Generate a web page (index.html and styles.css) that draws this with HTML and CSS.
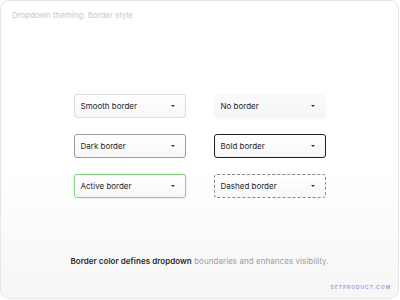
FILE: index.html
```html
<!DOCTYPE html>
<html lang="en">

<head>
	<meta charset="UTF-8">
	<title>Dropdown theming: Border style</title>
	<link rel="stylesheet" href="styles.css">
</head>

<body>
	<div class="card">
		<div class="title">Dropdown theming: Border style</div>

		<div class="grid">
			<div class="dropdown smooth"><span>Smooth border</span><i class="caret"></i></div>
			<div class="dropdown none"><span>No border</span><i class="caret"></i></div>
			<div class="dropdown dark"><span>Dark border</span><i class="caret"></i></div>
			<div class="dropdown bold"><span>Bold border</span><i class="caret"></i></div>
			<div class="dropdown active"><span>Active border</span><i class="caret"></i></div>
			<div class="dropdown dashed"><span>Dashed border</span><i class="caret"></i></div>
		</div>

		<p class="caption"><b>Border color defines dropdown</b> boundaries and enhances visibility.</p>

		<div class="brand">SETPRODUCT.COM</div>
	</div>
</body>

</html>
```

FILE: styles.css
```css
body {
	margin: 0;
	background: #fff;
	font-family: Inter, "Noto Sans", sans-serif;
}

.card {
	box-sizing: border-box;
	width: 399px;
	height: 299px;
	border: 1px solid #e6e6e6;
	border-radius: 9px;
	background: linear-gradient(#fff 0%, #fff 55%, #f6f6f6 100%);
	display: flex;
	flex-direction: column;
	align-items: center;
}

.title {
	align-self: flex-start;
	margin: 9px 0 0 11px;
	font-size: 8px;
	line-height: 10px;
	color: #c9c9c9;
	letter-spacing: -0.05px;
}

.grid {
	margin-top: 74px;
	display: grid;
	grid-template-columns: 112px 112px;
	column-gap: 28px;
	row-gap: 16px;
}

.dropdown {
	box-sizing: border-box;
	height: 24px;
	padding: 0 10px 0 6px;
	border: 1px solid #dcdcdc;
	border-radius: 3px;
	background: linear-gradient(#fff, #f7f7f7);
	display: flex;
	align-items: center;
	justify-content: space-between;
	font-size: 8px;
	color: #262626;
}

.caret {
	width: 0;
	height: 0;
	border-left: 2.5px solid transparent;
	border-right: 2.5px solid transparent;
	border-top: 2.5px solid #333;
}

.dropdown.none {
	border-color: transparent;
	background: linear-gradient(#fbfbfb, #f5f5f5);
	box-shadow: 0 1px 2px rgba(0, 0, 0, 0.03);
}

.dropdown.dark {
	border-color: #9a9a9a;
}

.dropdown.bold {
	border-color: #1e1e1e;
}

.dropdown.active {
	border-color: #86d486;
	box-shadow: 0 0 2px rgba(110, 210, 110, 0.5);
}

.dropdown.dashed {
	border: 1px dashed #8a8a8a;
}

.caption {
	margin: 58px 0 0;
	font-size: 8px;
	line-height: 10px;
	color: #9c9c9c;
	letter-spacing: 0.05px;
}

.caption b {
	font-weight: 600;
	color: #2a2a2a;
}

.brand {
	align-self: flex-end;
	margin: 18px 7px 0 0;
	font-size: 5px;
	font-weight: 700;
	letter-spacing: 0.9px;
	color: #aaa4e6;
}
```
